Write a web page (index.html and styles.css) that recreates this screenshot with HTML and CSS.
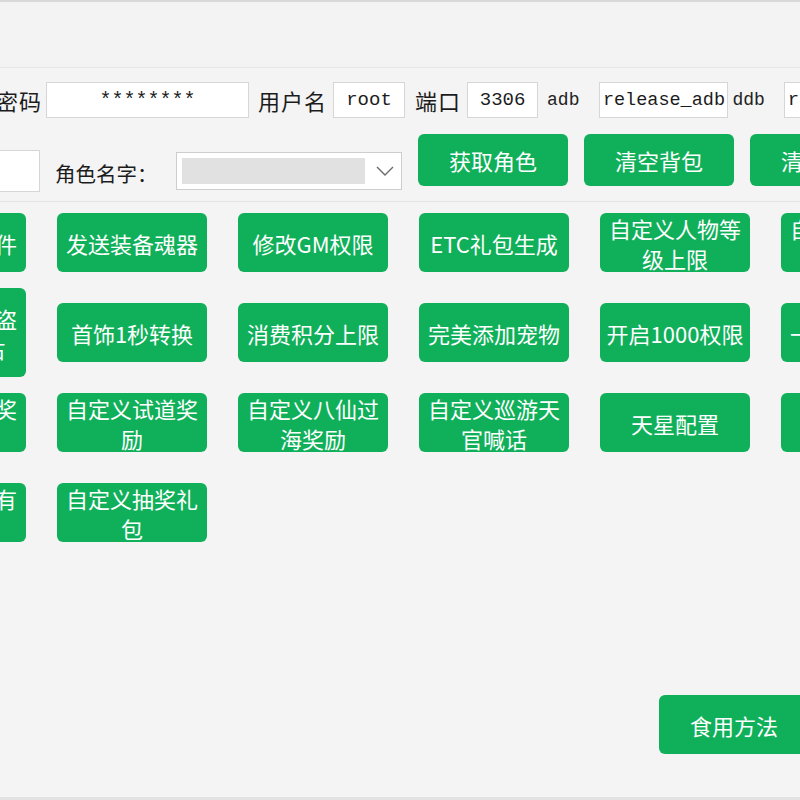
FILE: index.html
```html
<!DOCTYPE html>
<html lang="zh-CN">
<head>
  <meta charset="UTF-8" />
  <meta name="viewport" content="width=device-width, initial-scale=1" />
  <title>GM工具</title>
  <link rel="stylesheet" href="styles.css">
</head>
<body>
<div class="window">
  <div class="top-strip"></div>

  <div class="conn-row">
    <span class="lbl lbl-first">密码</span>
    <input class="field f-pwd" type="text" value="********">
    <span class="lbl">用户名</span>
    <input class="field f-user" type="text" value="root">
    <span class="lbl">端口</span>
    <input class="field f-port" type="text" value="3306">
    <span class="db-lbl">adb</span>
    <input class="field f-db" type="text" value="release_adb">
    <span class="db-lbl db-lbl-2">ddb</span>
    <input class="field f-db2" type="text" value="release_ddb">
  </div>

  <div class="role-row">
    <input class="name-box" type="text" value="">
    <span class="role-lbl">角色名字：</span>
    <div class="combo">
      <div class="combo-sel"></div>
      <svg class="combo-arrow" width="18" height="10" viewBox="0 0 18 10">
        <polyline points="1,1 9,9 17,1" fill="none" stroke="#6b6b6b" stroke-width="1.4" />
      </svg>
    </div>
    <button class="btn btn-top">获取角色</button>
    <button class="btn btn-top">清空背包</button>
    <button class="btn btn-top">清空仓库</button>
  </div>

  <div class="grid">
    <button class="btn">全服发送邮件</button>
    <button class="btn">发送装备魂器</button>
    <button class="btn">修改GM权限</button>
    <button class="btn">ETC礼包生成</button>
    <button class="btn">自定义人物等级上限</button>
    <button class="btn">自定义宠物等级上限</button>

    <button class="btn tall">解除账号防盗锁密码被占</button>
    <button class="btn">首饰1秒转换</button>
    <button class="btn">消费积分上限</button>
    <button class="btn">完美添加宠物</button>
    <button class="btn">开启1000权限</button>
    <button class="btn">一键发放福利</button>

    <button class="btn">自定义在线奖励</button>
    <button class="btn">自定义试道奖励</button>
    <button class="btn">自定义八仙过海奖励</button>
    <button class="btn">自定义巡游天官喊话</button>
    <button class="btn">天星配置</button>
    <button class="btn">星宿配置</button>

    <button class="btn">删除背包所有物品</button>
    <button class="btn">自定义抽奖礼包</button>
  </div>

  <div class="footer-row">
    <button class="btn">食用方法</button>
  </div>
</div>
</body>
</html>
```

FILE: styles.css
```css
* { margin: 0; padding: 0; box-sizing: border-box; }
html, body { width: 800px; height: 800px; overflow: hidden; }
body { background: #f4f4f4; color: #1c1c1c; font-family: "Noto Sans CJK SC", "Noto Sans", sans-serif; }

.window { height: 800px; overflow: hidden; border-top: 2px solid #d8d8d8; border-bottom: 3px solid #e2e2e2; }
.top-strip { height: 66px; border-bottom: 1px solid #e6e6e6; background: #f3f3f3; }

/* connection row */
.conn-row { display: flex; align-items: center; height: 36px; margin-top: 14px; margin-left: -4px; white-space: nowrap; }
.lbl { font-size: 22px; letter-spacing: 1px; line-height: 36px; margin-right: 6px; }
.lbl-first { margin-right: 4px; }
.field {
  height: 36px; background: #fff; border: 1px solid #d6d6d6; outline: none;
  font-family: "Liberation Mono", "DejaVu Sans Mono", monospace; font-size: 19px; color: #1c1c1c;
  text-align: center; padding: 0; flex: none;
}
.f-pwd { width: 203px; margin-right: 9px; font-size: 20px; }
.f-user { width: 72px; margin-right: 10px; }
.f-port { width: 71px; margin-right: 9px; }
.f-db { width: 129px; margin-right: 4px; font-size: 18.5px; }
.f-db2 { width: 130px; text-align: left; padding-left: 3px; }
.db-lbl { font-family: "Liberation Mono", "DejaVu Sans Mono", monospace; font-size: 18px; margin-right: 20px; color: #222; }
.db-lbl-2 { margin-right: 19px; }

/* role row */
.role-row { display: flex; align-items: flex-start; height: 68px; margin-top: 16px; padding-bottom: 9px; border-bottom: 1px solid #e4e4e4; }
.name-box { width: 100px; height: 42px; margin-left: -60px; margin-top: 16px; background: #fff; border: 1px solid #d6d6d6; outline: none; flex: none; }
.role-lbl { width: 103px; margin-left: 15px; margin-top: 25px; font-size: 20.5px; line-height: 28px; white-space: nowrap; flex: none; }
.combo {
  width: 226px; height: 38px; margin-left: 18px; margin-top: 18px; flex: none;
  background: #fff; border: 1px solid #cdcdcd; display: flex; align-items: center; padding: 0 7px 0 5px;
}
.combo-sel { width: 183px; height: 26px; background: #e1e1e1; }
.combo-arrow { margin-left: auto; }

/* buttons */
.btn {
  width: 150px; height: 59px; flex: none; border: none; border-radius: 6px;
  background: #10b05a; color: #fff; cursor: pointer;
  font-family: "Noto Sans CJK SC", "Noto Sans", sans-serif; font-size: 22px; line-height: 30px;
  padding: 0 6px; text-align: center; display: flex; align-items: center; justify-content: center;
}
.btn:hover { background: #0c9a4f; }
.btn-top { height: 52px; margin-left: 16px; }

.grid {
  display: grid; grid-template-columns: repeat(6, 150px); grid-auto-rows: 59px;
  column-gap: 31px; row-gap: 31px; margin-top: 11px; margin-left: -124px; width: 1055px;
}
.grid .tall { height: 89px; margin: -15px 0; }

.footer-row { display: flex; padding-left: 659px; margin-top: 153px; }
```
